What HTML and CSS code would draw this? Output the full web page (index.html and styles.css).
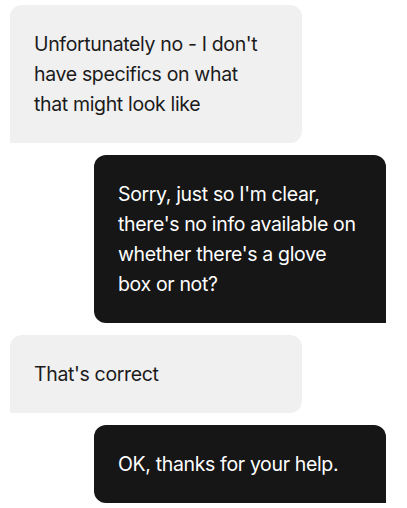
FILE: index.html
```html
<!DOCTYPE html>
<html lang="en">
<head>
<meta charset="utf-8">
<link rel="stylesheet" href="styles.css">
</head>
<body>
<div class="chat">
  <div class="bubble bubble-in">Unfortunately no - I don't have specifics on what that might look like</div>
  <div class="bubble bubble-out">Sorry, just so I'm clear, there's no info available on whether there's a glove box or not?</div>
  <div class="bubble bubble-in">That's correct</div>
  <div class="bubble bubble-out">OK, thanks for your help.</div>
</div>
</body>
</html>
```
FILE: styles.css
```css
html, body {
  margin: 0;
  padding: 0;
  background: #ffffff;
}
.chat {
  display: flex;
  flex-direction: column;
  gap: 12px;
  padding: 5px 21px 0 10px;
  font-family: Inter, "Noto Sans", sans-serif;
  font-size: 19.5px;
  letter-spacing: -0.35px;
  line-height: 30px;
}
.bubble {
  width: 292px;
  box-sizing: border-box;
  padding: 24px 27px 24px 24px;
}
.bubble-in {
  align-self: flex-start;
  background: #f0f0f0;
  color: #1b1b1b;
  border-radius: 12px 12px 12px 0;
}
.bubble-out {
  align-self: flex-end;
  background: #161616;
  color: #ffffff;
  border-radius: 12px 12px 0 12px;
}
```
